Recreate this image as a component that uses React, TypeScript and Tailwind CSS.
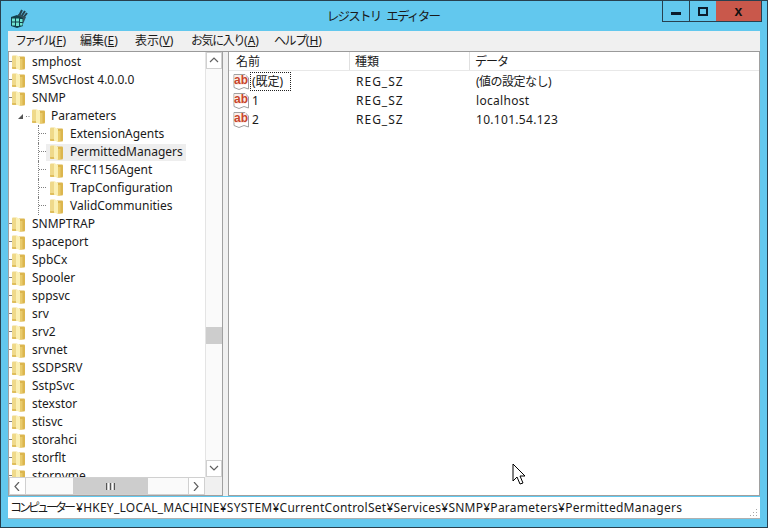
const font = "[font-family:'Noto_Sans','Noto_Sans_CJK_JP',sans-serif]";

const tree: { name: string; level: number; selected?: boolean }[] = [
  { name: "smphost", level: 0 },
  { name: "SMSvcHost 4.0.0.0", level: 0 },
  { name: "SNMP", level: 0 },
  { name: "Parameters", level: 1 },
  { name: "ExtensionAgents", level: 2 },
  { name: "PermittedManagers", level: 2, selected: true },
  { name: "RFC1156Agent", level: 2 },
  { name: "TrapConfiguration", level: 2 },
  { name: "ValidCommunities", level: 2 },
  { name: "SNMPTRAP", level: 0 },
  { name: "spaceport", level: 0 },
  { name: "SpbCx", level: 0 },
  { name: "Spooler", level: 0 },
  { name: "sppsvc", level: 0 },
  { name: "srv", level: 0 },
  { name: "srv2", level: 0 },
  { name: "srvnet", level: 0 },
  { name: "SSDPSRV", level: 0 },
  { name: "SstpSvc", level: 0 },
  { name: "stexstor", level: 0 },
  { name: "stisvc", level: 0 },
  { name: "storahci", level: 0 },
  { name: "storflt", level: 0 },
  { name: "stornvme", level: 0 },
];

const values = [
  { name: "(既定)", data: "(値の設定なし)", focus: true },
  { name: "1", data: "localhost" },
  { name: "2", data: "10.101.54.123" },
];

function Folder() {
  return (
    <svg width="15" height="17" viewBox="0 0 15 17" className="shrink-0">
      <path d="M1 2.5 Q1 1.5 2 1.5 H5 L6 3 V15 H2 Q1 15 1 14 Z" fill="#efd98a" />
      <path d="M8 2.5 H13 Q14 2.5 14 3.5 V14 Q14 15.5 13 15.5 H8 Z" fill="#dcb64e" />
      <path d="M5 1 L9 3 V16 L5 14.5 Z" fill="#fbf0b4" />
      <path d="M9 5 H11.5 V15.5 H9 Z" fill="#e9cb6c" />
      <path d="M1 13 H5 V15 H2 Q1 15 1 14 Z" fill="#dfbe5c" />
    </svg>
  );
}

function StringIcon() {
  return (
    <svg width="17" height="18" viewBox="0 0 17 18" className="shrink-0">
      <path d="M1 1.5 H12 L15.5 5 V16 L11 14.5 L6 16.5 L1 14.5 Z" fill="#fff" stroke="#a0a0a0" />
      <rect x="1.5" y="2" width="11.5" height="10" fill="#fdeee9" />
      <text x="1" y="11" fontSize="12" fontWeight="700" fill="#c8452c" fontFamily="'Liberation Sans', sans-serif">ab</text>
    </svg>
  );
}

function RegIcon() {
  return (
    <svg width="18" height="20" viewBox="0 0 18 20" className="mt-[8px] shrink-0">
      <path d="M9 7 L12 1 M11 8 L15 2 M13 9 L17 4" stroke="#25424f" strokeWidth="2" fill="none" />
      <path d="M8 5 L16 8 L13 15 L8 11 Z" fill="#34515e" />
      <path d="M1 8 L7 6 L13 9 L13 17 L7 19 L1 17 Z" fill="#123f4a" />
      <path d="M2 9.5h3v3h-3zM6 9.5h3v3h-3zM10 10h2.5v3H10zM2 13.5h3v3h-3zM6 13.5h3v3.5h-3zM10 14h2.5v2.5H10z" fill="#6fe3d0" />
    </svg>
  );
}

function Chevron({ dir }: { dir: "up" | "down" | "left" | "right" }) {
  const d = { up: "M1 6 L5 2 L9 6", down: "M1 2 L5 6 L9 2", left: "M6 0 L2 4.5 L6 9", right: "M2 0 L6 4.5 L2 9" }[dir];
  return (
    <svg width="10" height="9" viewBox="0 0 10 9" fill="none" stroke="#606060" strokeWidth="1.2">
      <path d={d} />
    </svg>
  );
}

function TreeRow({ name, level, selected }: { name: string; level: number; selected?: boolean }) {
  return (
    <div className="h-[18px] flex items-center shrink-0 text-[12px] text-[#1a1a1a]">
      {level === 0 && (
        <>
          <div className="w-[2px] h-[9px] self-start border-b border-dotted border-[#808080]" />
          <Folder />
          <span className="ml-[6px]">{name}</span>
        </>
      )}
      {level === 1 && (
        <>
          <svg width="22" height="18" viewBox="0 0 22 18" className="shrink-0">
            <path d="M14 7 V12 H9 Z" fill="#555" />
            <path d="M17 9.5h1M19.5 9.5h1" stroke="#808080" />
          </svg>
          <Folder />
          <span className="ml-[5px]">{name}</span>
        </>
      )}
      {level === 2 && (
        <>
          <div className="w-[29px] shrink-0" />
          <div className="w-[8px] h-full shrink-0 border-l border-dotted border-[#808080]">
            <div className="h-[9px] border-b border-dotted border-[#808080]" />
          </div>
          <div className={"h-[17px] flex items-center pl-[3px] pr-[3px] " + (selected ? "bg-[#eeeeee]" : "")}>
            <Folder />
            <span className="ml-[6px]">{name}</span>
          </div>
        </>
      )}
    </div>
  );
}

export default function App() {
  return (
    <div className={"w-[768px] h-[528px] overflow-hidden flex flex-col bg-[#62c8ee] border border-[#27404f] " + font}>
      {/* title bar */}
      <div className="h-[30px] shrink-0 flex items-start pl-[9px] pr-[5px]">
        <RegIcon />
        <div className="flex-1 text-center text-[12.5px] tracking-[-1.7px] [word-spacing:4px] leading-[32px] text-[#1a1a1a] pl-[76px]">レジストリ エディター</div>
        <div className="flex h-[21px] border border-t-0 border-[#27404f] shrink-0">
          <div className="w-[27px] flex items-end justify-center pb-[6px] border-r border-[#27404f]">
            <div className="w-[10px] h-[3px] bg-[#0c1c2c]" />
          </div>
          <div className="w-[26px] flex items-center justify-center">
            <div className="w-[10px] h-[9px] border-2 border-[#0c1c2c]" />
          </div>
          <div className="w-[45px] bg-[#c9584b] flex items-center justify-center text-[14px] font-bold text-[#111] leading-none [font-family:'Liberation_Sans',sans-serif]">
            x
          </div>
        </div>
      </div>

      <div className="flex-1 mx-[7px] flex flex-col min-h-0">
        {/* menu */}
        <div className="h-[20px] shrink-0 bg-[#f0f0f0] flex items-center pl-[7px] text-[12px] text-[#1a1a1a]">
          <span className="w-[65px]"><span className="tracking-[-2.6px]">ファイル</span>(<span className="underline">F</span>)</span>
          <span className="w-[55px]">編集(<span className="underline">E</span>)</span>
          <span className="w-[56px]">表示(<span className="underline">V</span>)</span>
          <span className="w-[83px]"><span className="tracking-[-1.4px]">お気に入り</span>(<span className="underline">A</span>)</span>
          <span><span className="tracking-[-1.4px]">ヘルプ</span>(<span className="underline">H</span>)</span>
        </div>

        {/* panes */}
        <div className="h-[445px] shrink-0 flex bg-[#f0f0f0] border-t border-[#9a9a9a]">
          <div className="w-[215px] shrink-0 flex flex-col border-l border-r border-[#a0a0a0] border-b bg-white">
            <div className="flex-1 min-h-0 flex">
              <div className="flex-1 min-w-0 overflow-hidden pt-[1px] flex flex-col">
                {tree.map((t) => (
                  <TreeRow key={t.name} {...t} />
                ))}
              </div>
              <div className="w-[17px] shrink-0 flex flex-col bg-[#fafafa] border-l border-[#e4e4e4]">
                <div className="h-[17px] flex items-center justify-center border border-[#d0d0d0] bg-white">
                  <Chevron dir="up" />
                </div>
                <div className="h-[258px]" />
                <div className="h-[17px] bg-[#cdcdcd]" />
                <div className="flex-1" />
                <div className="h-[17px] flex items-center justify-center border border-[#d0d0d0] bg-white">
                  <Chevron dir="down" />
                </div>
              </div>
            </div>
            <div className="h-[18px] shrink-0 flex bg-[#f0f0f0]">
              <div className="w-[196px] flex bg-[#fafafa] border border-[#d0d0d0]">
                <div className="w-[16px] flex items-center justify-center border-r border-[#d0d0d0] bg-white">
                  <Chevron dir="left" />
                </div>
                <div className="w-[47px]" />
                <div className="w-[75px] bg-[#cdcdcd] flex items-center justify-center gap-[1px]">
                  <div className="w-[1px] h-[7px] bg-[#555]" />
                  <div className="w-[1px] h-[7px] bg-[#fafafa]" />
                  <div className="w-[1px] h-[7px] bg-[#555]" />
                  <div className="w-[1px] h-[7px] bg-[#fafafa]" />
                  <div className="w-[1px] h-[7px] bg-[#555]" />
                </div>
                <div className="flex-1" />
                <div className="w-[16px] flex items-center justify-center border-l border-[#d0d0d0] bg-white">
                  <Chevron dir="right" />
                </div>
              </div>
            </div>
          </div>

          <div className="w-[5px] shrink-0" />

          <div className="flex-1 min-w-0 flex flex-col bg-white border-l border-r border-b border-[#a0a0a0] relative">
            <div className="h-[19px] shrink-0 flex text-[12px] text-[#1a1a1a] leading-[19px] border-b border-[#e8e8e8]">
              <div className="w-[121px] pl-[7px] border-r border-[#e0e0e0]">名前</div>
              <div className="w-[120px] pl-[5px] border-r border-[#e0e0e0]">種類</div>
              <div className="flex-1 pl-[5px] tracking-[-1px]">データ</div>
            </div>
            <div className="pt-[1px] flex flex-col">
              {values.map((v) => (
                <div key={v.name} className="h-[19px] flex items-center text-[12px] text-[#1a1a1a]">
                  <div className="w-[121px] pl-[4px] flex items-center">
                    <StringIcon />
                    <span className={"ml-[1px] leading-[17px] px-[1px] " + (v.focus ? "outline-1 outline-dotted outline-[#222] pr-[7px]" : "")}>
                      {v.name}
                    </span>
                  </div>
                  <div className="w-[120px] pl-[6px] tracking-[1px]">REG_SZ</div>
                  <div className={"pl-[6px] " + (v.focus ? "tracking-[-0.5px]" : "tracking-[0.3px]")}>{v.data}</div>
                </div>
              ))}
            </div>
            {/* mouse pointer */}
            <svg width="14" height="23" viewBox="0 0 14 23" className="absolute left-[283px] top-[411px]">
              <path d="M1 1 V18 L5 14 L8 21 L11 20 L8 13 L13 13 Z" fill="#fff" stroke="#000" strokeWidth="1" />
            </svg>
          </div>
        </div>

        {/* status */}
        <div className="h-[22px] mt-[1px] shrink-0 bg-white border-b border-[#b0b0b0] flex items-center justify-between pl-[2px] pr-[2px] text-[12px] text-[#1a1a1a]">
          <span className="tracking-[0.25px]">
            <span className="tracking-[-3px]">コンピューター</span>
            <span className="ml-[3px]">¥HKEY_LOCAL_MACHINE¥SYSTEM¥CurrentControlSet¥Services¥SNMP¥Parameters¥PermittedManagers</span>
          </span>
          <svg width="10" height="10" viewBox="0 0 10 10" className="self-end">
            <path d="M8 1h1v1H8zM5 4h1v1H5zM8 4h1v1H8zM2 7h1v1H2zM5 7h1v1H5zM8 7h1v1H8z" fill="#a8a8a8" />
          </svg>
        </div>
      </div>
    </div>
  );
}
